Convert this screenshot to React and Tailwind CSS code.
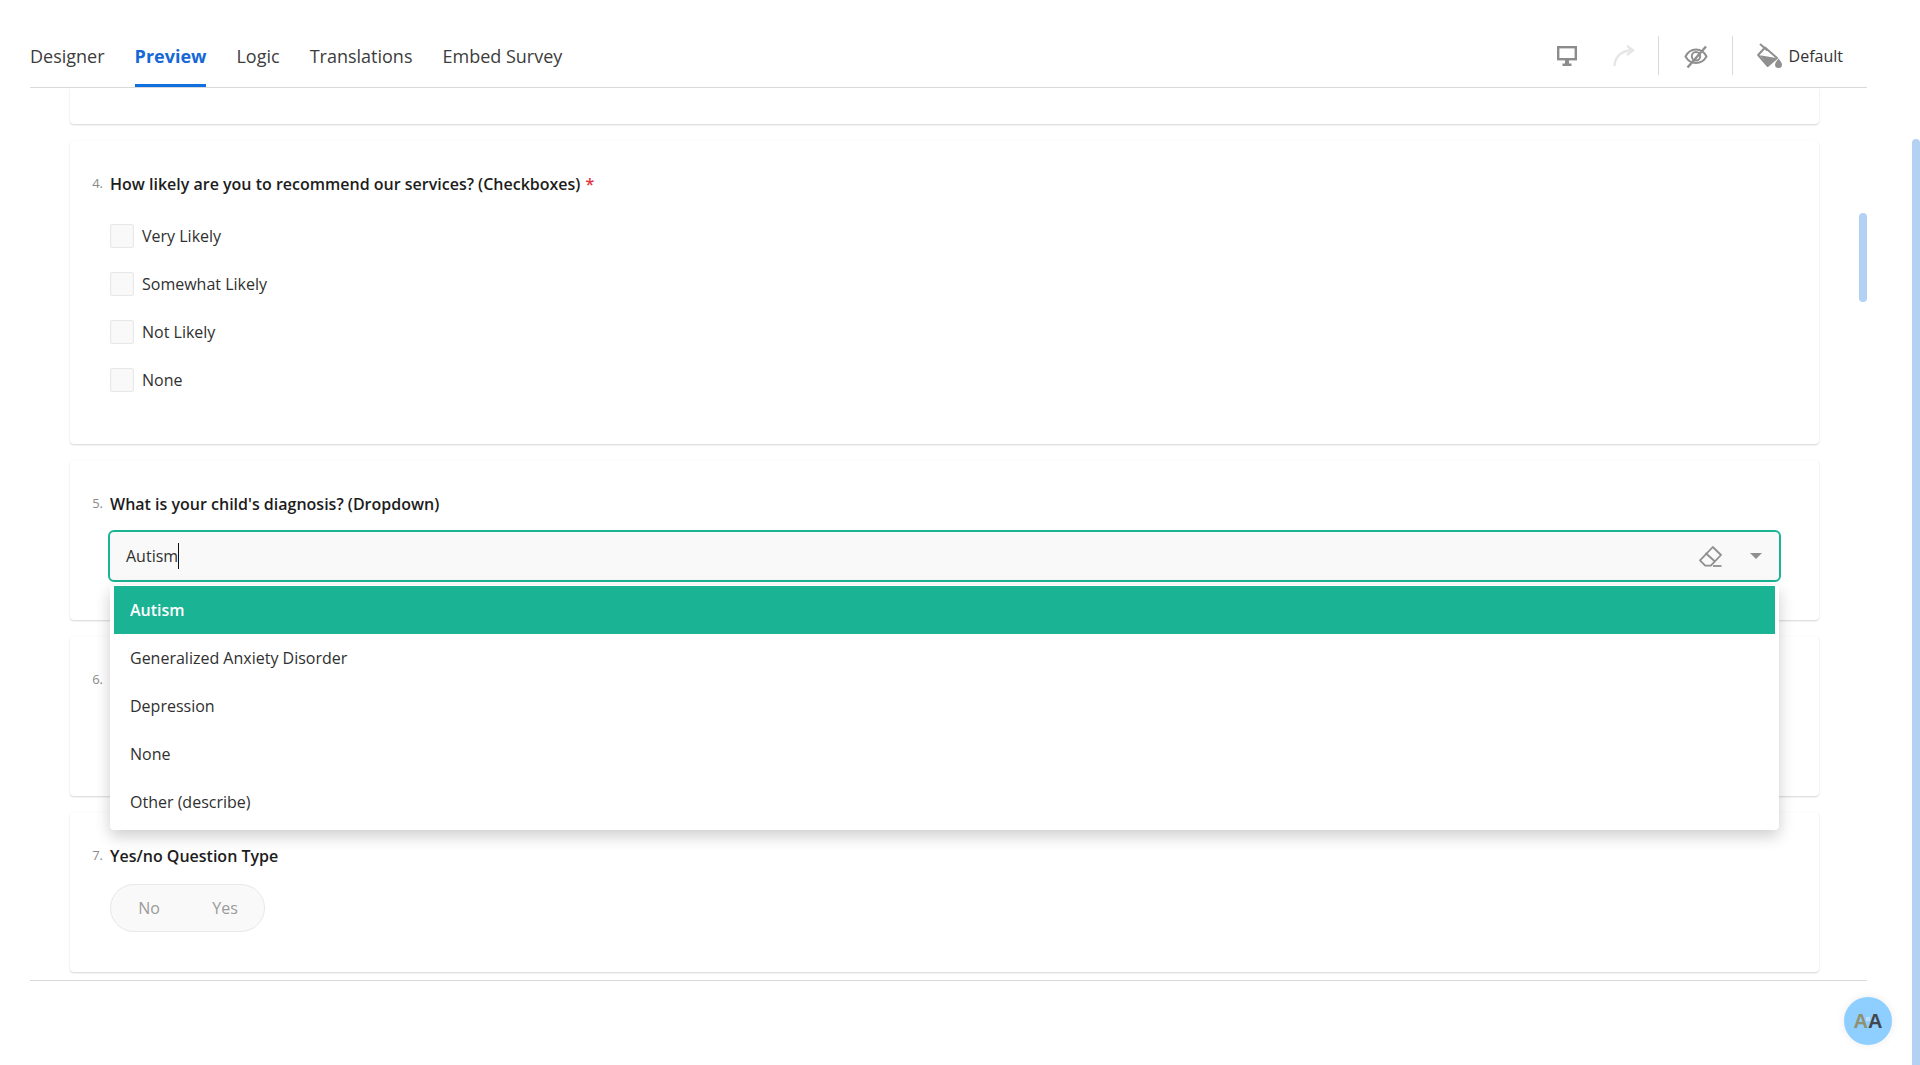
import React from "react";

const font = "font-['Open_Sans','Noto_Sans',sans-serif]";

function MonitorIcon() {
  return (
    <svg width="20" height="20" viewBox="0 0 20 20" fill="none">
      <rect x="1.200" y="1.200" width="17.600" height="12" stroke="#8c8c8c" strokeWidth="2.400" />
      <path d="M8 14h4v3.500h2.500V20h-9v-2.500H8z" fill="#8c8c8c" />
    </svg>
  );
}

function RedoIcon() {
  return (
    <svg width="22" height="22" viewBox="0 0 22 22" fill="none" stroke="#e6e6e6" strokeWidth="2.400">
      <path d="M1.500 21C2 11 9 5.200 20 5.200" />
      <path d="M14 .8 20 5.200 14 10" />
    </svg>
  );
}

function EyeSlashIcon() {
  return (
    <svg width="24" height="24" viewBox="0 0 24 24" fill="none" stroke="#8f8f8f" strokeWidth="2">
      <path d="M1.500 12.500C4 7.500 8 5.500 12 5.500s8 2 10.500 7C20 17 16 19 12 19S4 17 1.500 12.500z" />
      <circle cx="12" cy="12.300" r="4.200" />
      <path d="M3.500 23.500 22 2.500" strokeWidth="2.400" />
    </svg>
  );
}

function BucketIcon() {
  return (
    <svg width="26" height="26" viewBox="0 0 26 26" fill="none">
      <path d="M3 1l7.500 6.500" stroke="#8f8f8f" strokeWidth="2" />
      <path d="M8 4.500 20 15 10.700 23 1.200 12z" stroke="#8f8f8f" strokeWidth="2" strokeLinejoin="round" />
      <path d="M3 12.200 19 15 10.700 22.500z" fill="#8f8f8f" />
      <path d="M21.500 15.500c1.700 2.500 3.500 4.200 3.500 6a3.500 3.500 0 0 1-7 0c0-1.800 1.800-3.500 3.500-6z" fill="#8f8f8f" />
    </svg>
  );
}

function EraserIcon() {
  return (
    <svg width="23" height="21" viewBox="0 0 23 21" fill="none" stroke="#8f8f8f" strokeWidth="1.800">
      <path d="M13.800 1 22 9 11.800 19.700H6.200L1 14.300z" strokeLinejoin="round" />
      <path d="M6.500 7 16 15.500" />
      <path d="M14 20h8.500" />
    </svg>
  );
}

function Card({ children, className }) {
  return (
    <div className={`ml-[40px] mr-[48px] rounded-[4px] bg-white shadow-[0_1px_2px_rgba(0,0,0,0.16),0_0_1px_rgba(0,0,0,0.05)] ${className}`}>
      {children}
    </div>
  );
}

function QuestionTitle({ num, text, required }) {
  return (
    <div className="flex h-[24px] items-center">
      <span className="w-[40px] pr-[7px] text-right text-[13px] text-[#8a8a8a]">{num}.</span>
      <span className="text-[16px] font-semibold text-[#1d1d1d]">{text}</span>
      {required && <span className="ml-[5px] text-[16px] font-semibold text-[#e5323e]">*</span>}
    </div>
  );
}

function CheckOption({ label }) {
  return (
    <div className="flex h-[48px] items-center pl-[40px]">
      <span className="h-[24px] w-[24px] rounded-[2px] border border-[#e8e8e8] bg-[#f9f9f9] shadow-[inset_0_0_1px_rgba(0,0,0,0.08)]" />
      <span className="ml-[8px] text-[16px] text-[#303030]">{label}</span>
    </div>
  );
}

export default function App() {
  return (
    <div className={`relative h-[1065px] overflow-hidden bg-white ${font}`}>
      <div className="flex h-full flex-col pl-[30px] pr-[53px]">
        <header className="flex h-[88px] shrink-0 items-end justify-between border-b border-[#d9d9d9]">
          <nav className="flex gap-[30px] text-[18px] text-[#3c3c3c]">
            <span className="pb-[17px] pt-[10px]">Designer</span>
            <span className="border-b-[3px] border-[#0f6fde] pb-[14px] pt-[10px] font-bold text-[#1668d6]">Preview</span>
            <span className="pb-[17px] pt-[10px]">Logic</span>
            <span className="pb-[17px] pt-[10px]">Translations</span>
            <span className="pb-[17px] pt-[10px]">Embed Survey</span>
          </nav>
          <div className="flex h-[87px] items-center pr-[24px] pt-[24px]">
            <MonitorIcon />
            <span className="ml-[36px]"><RedoIcon /></span>
            <span className="ml-[23px] h-[39px] w-px bg-[#d9d9d9]" />
            <span className="ml-[25px]"><EyeSlashIcon /></span>
            <span className="ml-[24px] h-[39px] w-px bg-[#d9d9d9]" />
            <span className="ml-[24px]"><BucketIcon /></span>
            <span className="ml-[6px] text-[16px] text-[#333333]">Default</span>
          </div>
        </header>

        <main className="relative h-[893px] shrink-0 overflow-hidden border-b border-[#d9d9d9]">
          <div>
            <Card className="h-[36px] rounded-t-none" />

            <Card className="mt-[17px] h-[303px] pt-[31px]">
              <QuestionTitle num="4" text="How likely are you to recommend our services? (Checkboxes)" required />
              <div className="mt-[16px]">
                <CheckOption label="Very Likely" />
                <CheckOption label="Somewhat Likely" />
                <CheckOption label="Not Likely" />
                <CheckOption label="None" />
              </div>
            </Card>

            <Card className="mt-[16px] h-[160px] pt-[32px]">
              <QuestionTitle num="5" text="What is your child's diagnosis? (Dropdown)" />
              <div className="mx-[38px] mt-[14px] flex h-[52px] items-center rounded-[6px] border-2 border-[#1ab394] bg-[#f9f9f9] pl-[16px] pr-[17px]">
                <span className="border-r border-[#111111] text-[16px] leading-[26px] text-[#303030]">Autism</span>
                <span className="ml-auto"><EraserIcon /></span>
                <span className="ml-[28px] h-0 w-0 border-x-[6px] border-t-[6px] border-x-transparent border-t-[#8f8f8f]" />
              </div>
            </Card>

            <Card className="mt-[16px] h-[160px] pt-[32px]">
              <QuestionTitle num="6" text="" />
            </Card>

            <Card className="mt-[16px] h-[160px] pt-[32px]">
              <QuestionTitle num="7" text="Yes/no Question Type" />
              <div className="ml-[40px] mt-[16px] flex h-[48px] w-[155px] items-center rounded-full border border-[#e8e8e8] bg-[#f9f9f9] text-[16px] text-[#9b9b9b]">
                <span className="w-[76px] text-center">No</span>
                <span className="w-[76px] text-center">Yes</span>
              </div>
            </Card>
          </div>

          <div className="absolute right-0 top-[125px] h-[89px] w-[8px] rounded-full bg-[#b3d1f3]" />

          <div className="absolute left-[80px] right-[88px] top-[497px] rounded-[4px] bg-white px-[4px] pb-[4px] pt-[1px] shadow-[0_6px_16px_rgba(0,0,0,0.2)]">
            <div className="flex h-[48px] items-center bg-[#1ab394] pl-[16px] text-[16px] font-semibold text-white">Autism</div>
            <div className="flex h-[48px] items-center pl-[16px] text-[16px] text-[#303030]">Generalized Anxiety Disorder</div>
            <div className="flex h-[48px] items-center pl-[16px] text-[16px] text-[#303030]">Depression</div>
            <div className="flex h-[48px] items-center pl-[16px] text-[16px] text-[#303030]">None</div>
            <div className="flex h-[48px] items-center pl-[16px] text-[16px] text-[#303030]">Other (describe)</div>
          </div>
        </main>
      </div>

      <div className="absolute right-0 top-[139px] h-[926px] w-[8px] rounded-t-full bg-[#b3d1f3]" />

      <div className="absolute left-[1844px] top-[997px] flex h-[48px] w-[48px] items-center justify-center rounded-full bg-[#8fcfff] shadow-[0_0_8px_rgba(0,0,0,0.08)]">
        <span className="font-['Liberation_Sans',sans-serif] text-[20px] font-bold text-[#8f9170]">A</span>
        <span className="font-['Liberation_Sans',sans-serif] text-[20px] font-bold text-[#43474d]">A</span>
        <span className="absolute left-[22px] top-[20px] h-[4px] w-[4px] bg-[#bfe0f7]" />
      </div>
    </div>
  );
}
